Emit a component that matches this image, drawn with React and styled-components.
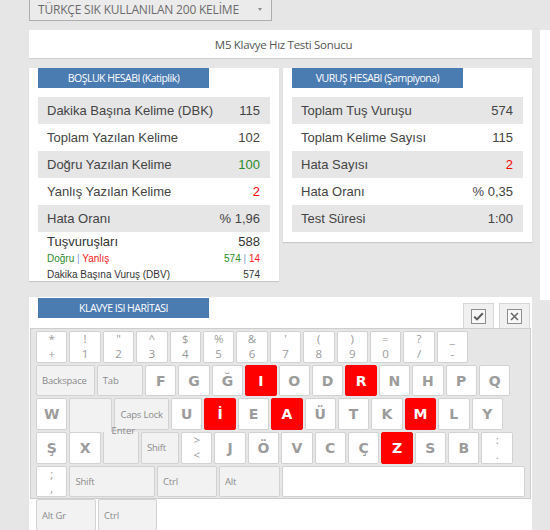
import React from "react";
import styled, { createGlobalStyle, css } from "styled-components";

const GlobalStyle = createGlobalStyle`
  html, body {
    margin: 0;
    padding: 0;
  }
  body {
    background: #e6e6e6;
    font-family: "Open Sans", "Noto Sans", sans-serif;
    overflow: hidden;
  }
`;

// -- sayfa iskeleti
const Page = styled.div`
  display: flex;
  align-items: flex-start;
  gap: 8px;
  padding-left: 29px;
  height: 530px;
`;

const Main = styled.div`
  width: 504px;
  height: 530px;
  display: flex;
  flex-direction: column;
`;

const SidePanel = styled.div`
  width: 20px;
  height: 270px;
  margin-top: 30px;
  background: #fff;
`;

const Dropdown = styled.div`
  box-sizing: border-box;
  width: 243px;
  height: 21px;
  border: 1px solid #adadad;
  border-top: none;
  background: #ebebeb;
  display: flex;
  align-items: center;
  justify-content: space-between;
  padding: 0 9px 1px 8px;
  font-size: 12px;
  letter-spacing: -0.2px;
  color: #6b6b6b;
`;

const Caret = styled.span`
  width: 0;
  height: 0;
  border-left: 2.5px solid transparent;
  border-right: 2.5px solid transparent;
  border-top: 3px solid #8c8c8c;
`;

const TitleBar = styled.div`
  margin-top: 9px;
  height: 28px;
  background: #fff;
  box-shadow: 0 1px 0 #cfcfcf;
  display: flex;
  align-items: center;
  justify-content: center;
  padding-left: 6px;
  font-size: 11.5px;
  letter-spacing: -0.3px;
  color: #555;
`;

const CardsRow = styled.div`
  display: flex;
  align-items: flex-start;
  gap: 4px;
  margin-top: 10px;
`;

const Card = styled.div`
  width: ${(p) => p.$w}px;
  background: #fff;
  box-shadow: 0 1px 1px #c9c9c9;
  padding-bottom: ${(p) => p.$pb || 0}px;
`;

const Header = styled.div`
  width: 171px;
  height: 20px;
  margin-left: 9px;
  margin-top: ${(p) => p.$mt || 0}px;
  background: #4a7bb1;
  color: #fff;
  display: flex;
  align-items: center;
  justify-content: center;
  font-size: 10.5px;
  letter-spacing: -0.5px;
`;

// -- istatistik satırları
const StatList = styled.div`
  margin: 9px 9px 0;
`;

const StatRow = styled.div`
  height: 27px;
  display: flex;
  align-items: center;
  justify-content: space-between;
  padding: 0 10px 0 9px;
  background: ${(p) => (p.$shade ? "#e6e6e6" : "#fff")};
  font-family: "Liberation Sans", Arial, sans-serif;
  font-size: 13px;
  color: #444;
`;

const Value = styled.span`
  color: ${(p) => p.$color || "#444"};
`;

const Summary = styled.div`
  margin: 0 9px;
  padding: 1px 10px 0 9px;
  font-family: "Liberation Sans", Arial, sans-serif;
  color: #333;
`;

const SumLine = styled.div`
  height: ${(p) => (p.$h ? p.$h : 17)}px;
  display: flex;
  align-items: center;
  justify-content: space-between;
  font-size: ${(p) => (p.$big ? 13 : 10)}px;
`;

const Green = styled.span`
  color: #2c8c2c;
`;

const Red = styled.span`
  color: #ff1a1a;
`;

const Bar = styled.span`
  color: #7f9fc9;
`;

// -- klavye kartı
const KeyboardCard = styled.div`
  margin-top: 16px;
  flex: 1;
  background: #fff;
`;

const TopBar = styled.div`
  height: 31px;
  display: flex;
  justify-content: space-between;
  align-items: flex-start;
`;

const ToolButtons = styled.div`
  align-self: flex-end;
  display: flex;
  gap: 5px;
  margin-right: 2px;
`;

const ToolButton = styled.div`
  box-sizing: border-box;
  width: 31px;
  height: 25px;
  background: #f0f0f0;
  border: 1px solid #d6d6d6;
  border-bottom: none;
  display: flex;
  align-items: center;
  justify-content: center;
`;

const Keyboard = styled.div`
  box-sizing: border-box;
  height: 171px;
  margin: 0 1px;
  padding: 2px 5px 0;
  background: #e6e6e6;
  border: 1px solid #cdcdcd;
  display: flex;
  flex-direction: column;
  gap: 2px;
`;

const KeyRow = styled.div`
  display: flex;
  align-items: flex-start;
  gap: 2px;
  height: 31.7px;
  flex: none;
`;

const keyBase = css`
  box-sizing: border-box;
  flex: none;
  width: ${(p) => p.$w || 31.4}px;
  height: 31.7px;
  border: 1px solid #d2d2d2;
  border-radius: 2px;
`;

const CharKey = styled.div`
  ${keyBase}
  background: ${(p) => (p.$hot ? "#ff0000" : "#fff")};
  border-color: ${(p) => (p.$hot ? "#ff0000" : "#d2d2d2")};
  color: ${(p) => (p.$hot ? "#fff" : "#9c9c9c")};
  display: flex;
  align-items: center;
  justify-content: center;
  font-family: "DejaVu Sans", Verdana, sans-serif;
  font-weight: bold;
  font-size: 14px;
`;

const DualKey = styled.div`
  ${keyBase}
  background: #fff;
  color: #9a9a9a;
  display: flex;
  flex-direction: column;
  align-items: center;
  justify-content: center;
  font-size: 11.5px;
  line-height: 14.5px;
`;

const FnKey = styled.div`
  ${keyBase}
  background: #f2f2f2;
  color: #8a8a8a;
  display: flex;
  align-items: center;
  padding-left: 5px;
  font-size: 9.5px;
  letter-spacing: -0.2px;
  white-space: nowrap;
`;

const SpaceKey = styled.div`
  ${keyBase}
  background: #fff;
`;

// Enter iki satıra yayılıyor: üst parça alttakiyle birleşsin diye boşluğa taşıyor
const EnterTop = styled.div`
  ${keyBase}
  position: relative;
  z-index: 1;
  height: 33.7px;
  background: #f2f2f2;
  border-bottom: none;
  border-radius: 2px 2px 0 0;
`;

const EnterBottom = styled.div`
  ${keyBase}
  background: #f2f2f2;
  border-top: none;
  border-radius: 0 0 2px 2px;
`;

const EnterLabel = styled.span`
  position: absolute;
  top: 26px;
  left: 41px;
  font-size: 9.5px;
  line-height: 12px;
  color: #8a8a8a;
  white-space: nowrap;
`;

const d = (top, bottom) => ({ type: "dual", top, bottom });
const c = (t) => ({ type: "char", t });
const h = (t) => ({ type: "char", t, hot: true });
const f = (t, w) => ({ type: "fn", t, w });

const keyRows = [
  [d("*", "+"), d("!", "1"), d('"', "2"), d("^", "3"), d("$", "4"), d("%", "5"), d("&", "6"), d("'", "7"), d("(", "8"), d(")", "9"), d("=", "0"), d("?", "/"), d("_", "-")],
  [f("Backspace", 58.8), f("Tab", 46.2), c("F"), c("G"), c("Ğ"), h("I"), c("O"), c("D"), h("R"), c("N"), c("H"), c("P"), c("Q")],
  [c("W"), { type: "enterTop", w: 43 }, f("Caps Lock", 54.6), c("U"), h("İ"), c("E"), h("A"), c("Ü"), c("T"), c("K"), h("M"), c("L"), c("Y")],
  [c("Ş"), c("X"), { type: "enterBottom", w: 36.2 }, f("Shift", 38), d(">", "<"), c("J"), c("Ö"), c("V"), c("C"), c("Ç"), h("Z"), c("S"), c("B"), d(":", ".")],
  [d(";", ","), f("Shift", 85.6), f("Ctrl", 60), f("Alt", 61), { type: "space", w: 243 }],
  [f("Alt Gr", 60), f("Ctrl", 59)],
];

function Key({ k }) {
  switch (k.type) {
    case "dual":
      return (
        <DualKey>
          <span>{k.top}</span>
          <span>{k.bottom}</span>
        </DualKey>
      );
    case "fn":
      return <FnKey $w={k.w}>{k.t}</FnKey>;
    case "enterTop":
      return (
        <EnterTop $w={k.w}>
          <EnterLabel>Enter</EnterLabel>
        </EnterTop>
      );
    case "enterBottom":
      return <EnterBottom $w={k.w} />;
    case "space":
      return <SpaceKey $w={k.w} />;
    default:
      return <CharKey $hot={k.hot}>{k.t}</CharKey>;
  }
}

const CheckIcon = () => (
  <svg width="15" height="15" viewBox="0 0 15 15">
    <rect x="0.5" y="0.5" width="14" height="14" fill="#f8f8f8" stroke="#8c8c8c" />
    <path d="M3.2 7.6 L6 10.4 L11.8 4.2" fill="none" stroke="#5a5a5a" strokeWidth="2" />
  </svg>
);

const CloseIcon = () => (
  <svg width="15" height="15" viewBox="0 0 15 15">
    <rect x="0.5" y="0.5" width="14" height="14" fill="#f8f8f8" stroke="#8c8c8c" />
    <path d="M4 4 L11 11 M11 4 L4 11" fill="none" stroke="#666" strokeWidth="1.5" />
  </svg>
);

const spaceStats = [
  ["Dakika Başına Kelime (DBK)", "115"],
  ["Toplam Yazılan Kelime", "102"],
  ["Doğru Yazılan Kelime", "100", "#2c8c2c"],
  ["Yanlış Yazılan Kelime", "2", "#ff0000"],
  ["Hata Oranı", "% 1,96"],
];

const strokeStats = [
  ["Toplam Tuş Vuruşu", "574"],
  ["Toplam Kelime Sayısı", "115"],
  ["Hata Sayısı", "2", "#ff0000"],
  ["Hata Oranı", "% 0,35"],
  ["Test Süresi", "1:00"],
];

function Stats({ items }) {
  return (
    <StatList>
      {items.map(([label, value, color], i) => (
        <StatRow key={label} $shade={i % 2 === 0}>
          <span>{label}</span>
          <Value $color={color}>{value}</Value>
        </StatRow>
      ))}
    </StatList>
  );
}

function App() {
  return (
    <Page>
      <GlobalStyle />
      <Main>
        <Dropdown>
          <span>TÜRKÇE SIK KULLANILAN 200 KELİME</span>
          <Caret />
        </Dropdown>
        <TitleBar>M5 Klavye Hız Testi Sonucu</TitleBar>

        <CardsRow>
          <Card $w={250}>
            <Header>BOŞLUK HESABI (Katiplik)</Header>
            <Stats items={spaceStats} />
            <Summary>
              <SumLine $big>
                <span>Tuşvuruşları</span>
                <span>588</span>
              </SumLine>
              <SumLine>
                <span>
                  <Green>Doğru</Green> <Bar>|</Bar> <Red>Yanlış</Red>
                </span>
                <span>
                  <Green>574</Green> <Bar>|</Bar> <Red>14</Red>
                </span>
              </SumLine>
              <SumLine $h={14}>
                <span>Dakika Başına Vuruş (DBV)</span>
                <span>574</span>
              </SumLine>
            </Summary>
          </Card>
          <Card $w={249} $pb={10}>
            <Header>VURUŞ HESABI (Şampiyona)</Header>
            <Stats items={strokeStats} />
          </Card>
        </CardsRow>

        <KeyboardCard>
          <TopBar>
            <Header $mt={1}>KLAVYE ISI HARİTASI</Header>
            <ToolButtons>
              <ToolButton>
                <CheckIcon />
              </ToolButton>
              <ToolButton>
                <CloseIcon />
              </ToolButton>
            </ToolButtons>
          </TopBar>
          <Keyboard>
            {keyRows.map((row, r) => (
              <KeyRow key={r}>
                {row.map((k, i) => (
                  <Key key={i} k={k} />
                ))}
              </KeyRow>
            ))}
          </Keyboard>
        </KeyboardCard>
      </Main>
      <SidePanel />
    </Page>
  );
}

export default App;
